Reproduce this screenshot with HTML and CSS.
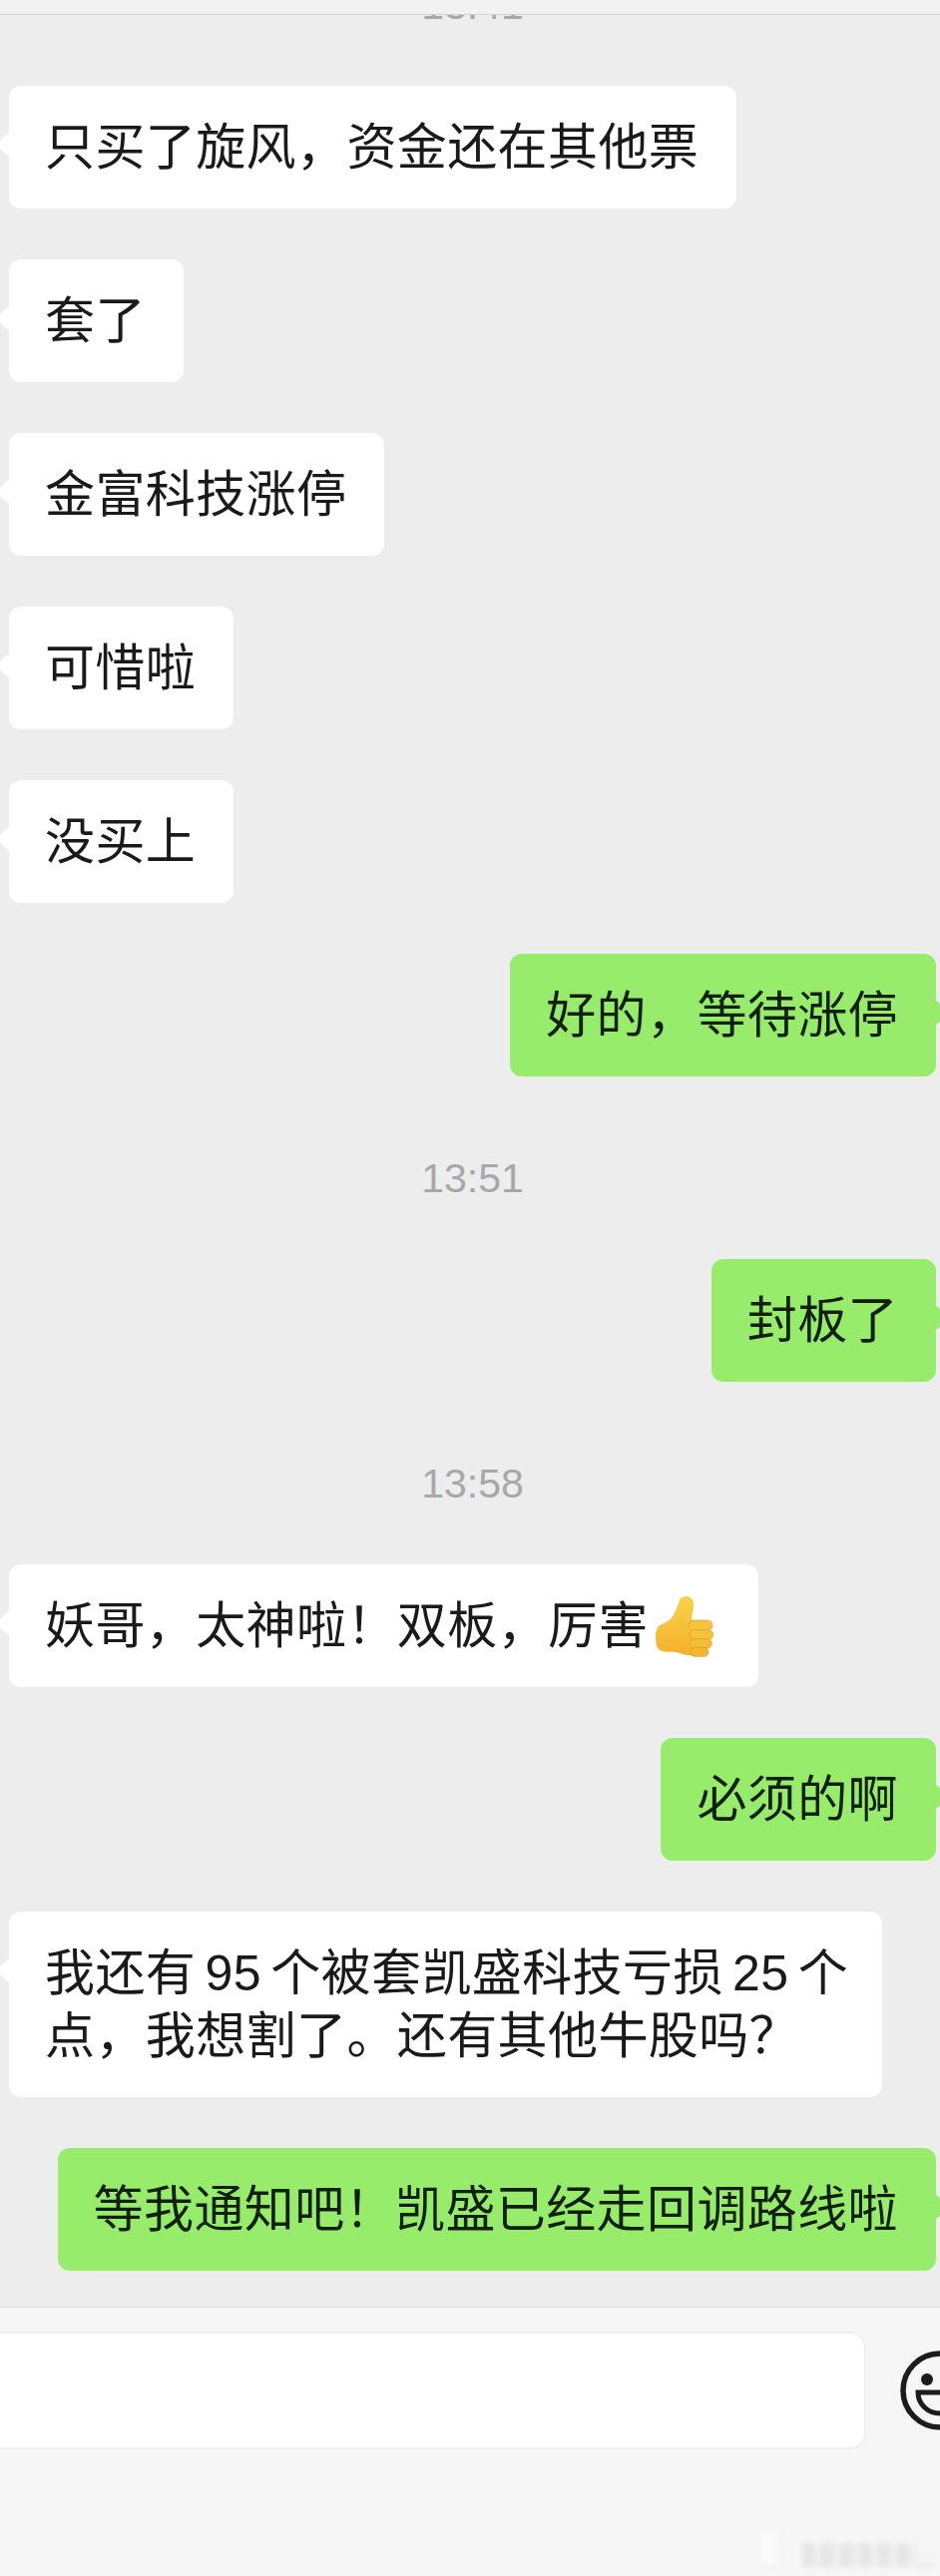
FILE: index.html
```html
<!DOCTYPE html>
<html lang="zh-CN">
<head>
    <meta charset="UTF-8">
    <meta name="viewport" content="width=device-width, initial-scale=1.0">
    <title>聊天记录</title>
    <link rel="stylesheet" href="styles.css">
</head>
<body>
    <div class="top-bar"></div>

    <div class="chat">
        <div class="time time-first">13:41</div>

        <div class="msg"><div class="bubble">只买了旋风，资金还在其他票</div></div>
        <div class="msg"><div class="bubble">套了</div></div>
        <div class="msg"><div class="bubble">金富科技涨停</div></div>
        <div class="msg"><div class="bubble">可惜啦</div></div>
        <div class="msg"><div class="bubble">没买上</div></div>
        <div class="msg mine"><div class="bubble">好的，等待涨停</div></div>

        <div class="time">13:51</div>
        <div class="msg mine"><div class="bubble">封板了</div></div>

        <div class="time">13:58</div>
        <div class="msg">
            <div class="bubble">妖哥，太神啦！双板，厉害<svg class="thumb" viewBox="345 135 207 207" aria-hidden="true">
                <defs>
                    <linearGradient id="thumbFill" x1="0" y1="0" x2="0" y2="1">
                        <stop offset="0" stop-color="#fbd24a"/>
                        <stop offset="1" stop-color="#f3b02c"/>
                    </linearGradient>
                </defs>
                <path d="M428 160C431 146 452 143 464 152C473 160 472 178 468 196C466 206 465 214 466 222L472 326L440 322C428 314 412 314 392 314C372 314 360 306 358 286C356 266 358 246 366 236C382 228 398 224 408 208C416 194 424 178 428 160Z" fill="url(#thumbFill)"/>
                <rect x="456" y="219" width="72" height="31" rx="15" fill="#f7c33c" stroke="#e09a22" stroke-width="2"/>
                <rect x="460" y="248" width="70" height="29" rx="14" fill="#f7c33c" stroke="#e09a22" stroke-width="2"/>
                <rect x="460" y="275" width="66" height="28" rx="14" fill="#f6bd36" stroke="#e09a22" stroke-width="2"/>
                <rect x="462" y="301" width="54" height="27" rx="13" fill="#f4b630" stroke="#e09a22" stroke-width="2"/>
            </svg></div>
        </div>
        <div class="msg mine"><div class="bubble">必须的啊</div></div>
        <div class="msg">
            <div class="bubble bubble-wide">我还有 95 个被套凯盛科技亏损 25 个<br>点，我想割了。还有其他牛股吗？</div>
        </div>
        <div class="msg mine"><div class="bubble">等我通知吧！凯盛已经走回调路线啦</div></div>
    </div>

    <div class="footer">
        <div class="input-row">
            <div class="input-box"></div>
            <svg class="face" viewBox="0 0 80 80" aria-hidden="true">
                <circle cx="40" cy="40" r="37" fill="none" stroke="#1c1c1c" stroke-width="5.5"/>
                <circle cx="27" cy="29" r="6" fill="#1c1c1c"/>
                <circle cx="53" cy="29" r="6" fill="#1c1c1c"/>
                <path d="M18 42H62C62 54 52 63 40 63C28 63 18 54 18 42Z" fill="none" stroke="#1c1c1c" stroke-width="5"/>
            </svg>
        </div>
        <div class="mark">
            <span class="mark-cup"></span>
            <span class="mark-text"></span>
            <span class="mark-line"></span>
        </div>
    </div>
</body>
</html>
```

FILE: styles.css
```css
* {
    margin: 0;
    padding: 0;
    box-sizing: border-box;
}

body {
    width: 942px;
    height: 2582px;
    overflow: hidden;
    display: flex;
    flex-direction: column;
    font-family: "Liberation Sans", "Noto Sans CJK SC", sans-serif;
    background-color: #ededed;
}

.top-bar {
    position: relative;
    z-index: 2;
    flex: 0 0 15px;
    background: #f2f2f2;
    border-bottom: 1px solid #d2d2d2;
}

.chat {
    flex: 1;
    margin-top: -35px;
    padding: 0 4px 0 9px;
    overflow: hidden;
}

.time {
    height: 50px;
    margin: 77px 0 56px;
    line-height: 50px;
    text-align: center;
    font-size: 41px;
    color: #a8a8a8;
}

.time-first {
    margin: 0 0 56px;
}

.msg {
    display: flex;
    margin-bottom: 51px;
}

.msg.mine {
    justify-content: flex-end;
}

.bubble {
    position: relative;
    padding: 31px 38px 29px 36px;
    border-radius: 12px;
    background: white;
    color: #1a1a1a;
    font-size: 50px;
    letter-spacing: 0.4px;
    word-spacing: -5px;
    line-height: 63px;
}

.bubble::before {
    content: "";
    position: absolute;
    top: 50px;
    left: -9px;
    width: 18px;
    height: 18px;
    background: inherit;
    border-radius: 3px;
    transform: rotate(45deg);
}

.mine .bubble {
    background: #98ec6b;
    color: #0f1f08;
}

.mine .bubble::before {
    left: auto;
    right: -9px;
}

.bubble-wide {
    width: 875px;
    white-space: nowrap;
}

.thumb {
    width: 69px;
    height: 69px;
    margin: -10px 0 -4px 3px;
    vertical-align: middle;
}

.footer {
    flex: 0 0 270px;
    background: #f6f6f6;
    border-top: 1px solid #dadada;
    overflow: hidden;
}

.input-row {
    display: flex;
    align-items: center;
    padding-top: 24px;
}

.input-box {
    flex: 0 0 888px;
    height: 118px;
    margin-left: -20px;
    background: white;
    border: 2px solid #f0f0f0;
    border-radius: 16px;
}

.face {
    flex: 0 0 80px;
    width: 80px;
    height: 80px;
    margin-left: 34px;
}

/* 水印，原图里是糊的 */
.mark {
    display: flex;
    align-items: flex-end;
    margin: 83px 0 0 760px;
    height: 35px;
    filter: blur(2.5px);
}

.mark-cup {
    width: 22px;
    height: 35px;
    background: #fbfbfb;
    border: 1px solid #e6e6e6;
    border-top: none;
    border-radius: 0 0 8px 8px;
}

.mark-text {
    width: 115px;
    height: 24px;
    margin-left: 22px;
    background: repeating-linear-gradient(90deg, #e6e6e6 0 12px, #f0f0f0 12px 19px);
}

.mark-line {
    width: 16px;
    height: 3px;
    background: #e0e0e0;
}
```
